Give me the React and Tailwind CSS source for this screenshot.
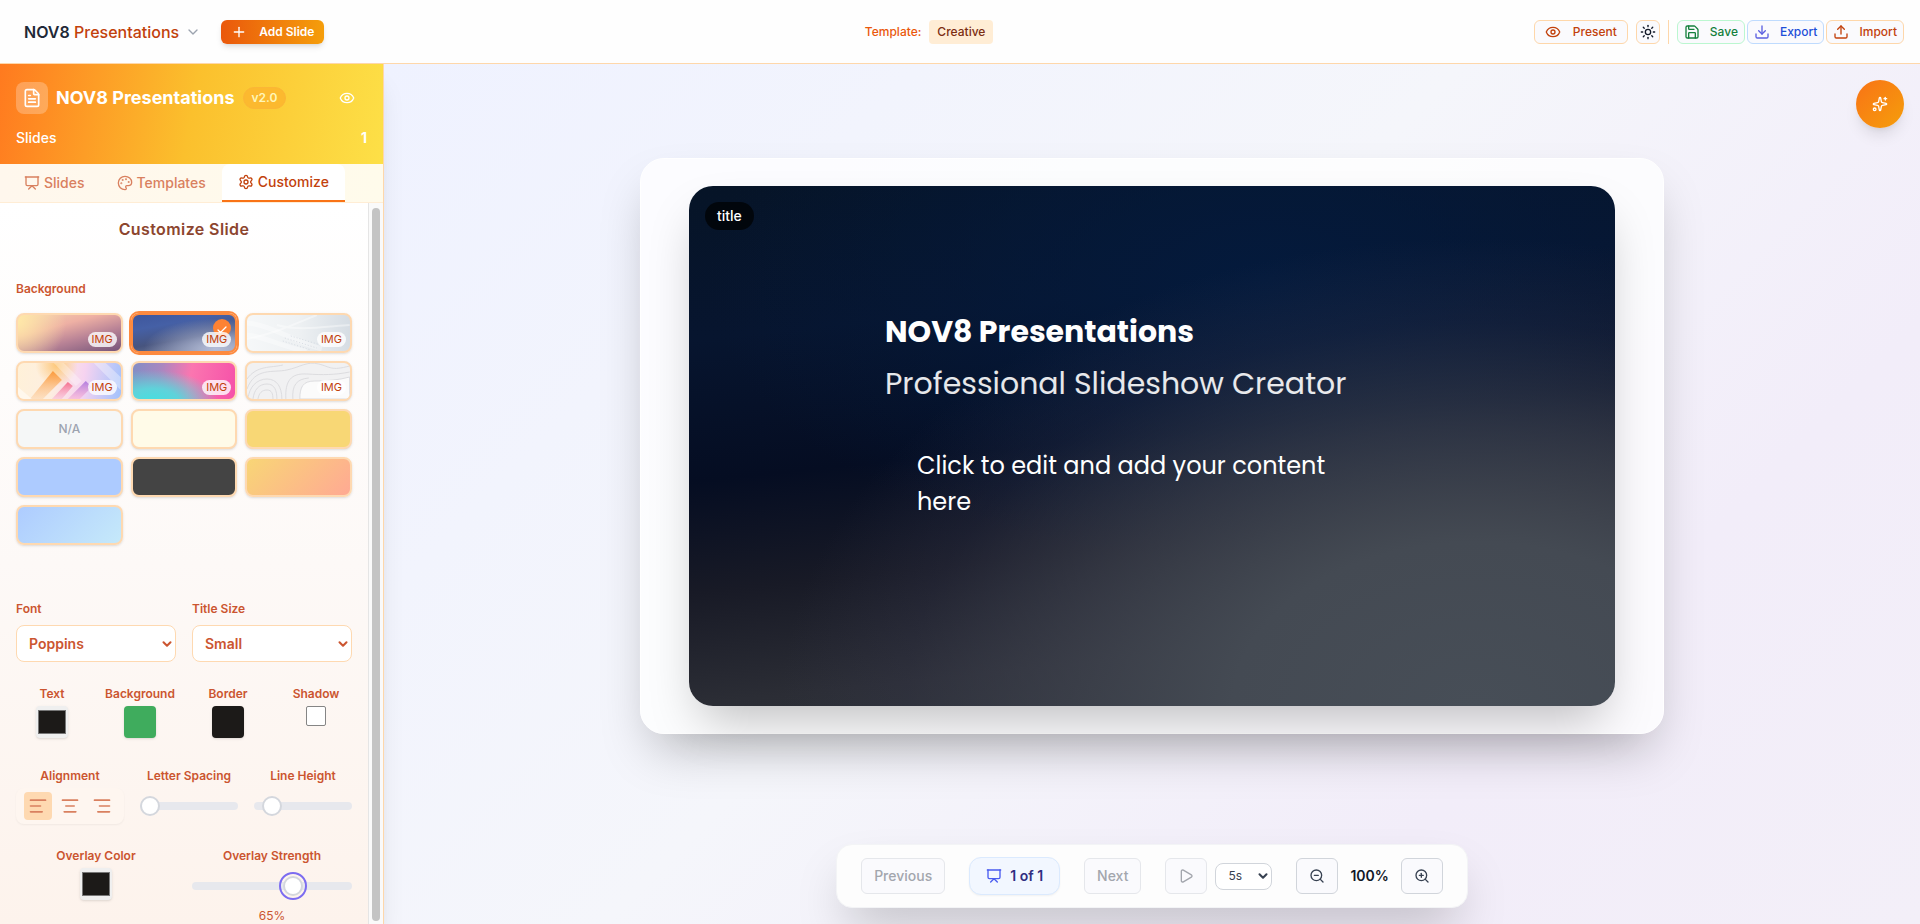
import {
  ChevronDown, Plus, Eye, Sun, Save, Download, Upload, FileText, Presentation, Palette, Settings,
  Check, TextAlignStart, TextAlignCenter, TextAlignEnd, Play, ZoomIn, ZoomOut, Sparkles,
} from "lucide-react";

function Header() {
  const action = "flex h-6 items-center rounded-md border bg-[#fafafd] text-xs font-medium";
  return (
    <header className="flex h-16 shrink-0 items-center justify-between border-b border-[#fed7aa] bg-[#fefefe] px-4">
      <div className="flex items-center gap-5">
        <button className="flex items-center gap-1.5 pl-2 text-base font-medium text-[#c2410c]">
          <span><span className="font-semibold text-[#1f2937]">NOV8</span> Presentations</span>
          <ChevronDown className="size-4 text-[#9ca3af]" />
        </button>
        <button className="flex h-6 items-center gap-3 rounded-md bg-[linear-gradient(90deg,#ea580c,#f59e0b)] px-[10px] text-xs font-semibold text-white shadow-md">
          <Plus className="size-4" />
          Add Slide
        </button>
      </div>
      <div className="flex items-center gap-2 text-xs font-medium">
        <span className="text-[#ea580c]">Template:</span>
        <span className="flex h-6 items-center rounded-sm bg-[#ffedd5] px-2 text-[#7c2d12]">Creative</span>
      </div>
      <div className="flex items-center gap-2">
        <button className={`${action} gap-3 border-[#fed7aa] px-[10px] text-[#c2410c]`}>
          <Eye className="size-4" />
          Present
        </button>
        <button aria-label="Toggle theme" className={`${action} w-6 justify-center border-[#fed7aa] text-[#111827]`}>
          <Sun className="size-4" />
        </button>
        <span className="h-6 w-px bg-[#fed7aa]" />
        <div className="flex items-center gap-[2px]">
          <button className={`${action} gap-2.5 border-[#bbf7d0] px-1.5 text-[#15803d]`}>
            <Save className="size-4" />
            Save
          </button>
          <button className={`${action} gap-2.5 border-[#bfdbfe] px-1.5 text-[#1d4ed8]`}>
            <Download className="size-4 text-[#5b5fe0]" />
            Export
          </button>
          <button className={`${action} gap-2.5 border-[#fed7aa] px-1.5 text-[#c2410c]`}>
            <Upload className="size-4" />
            Import
          </button>
        </div>
      </div>
    </header>
  );
}

const swatches = [
  { name: "Sunset", img: true, fill: "bg-[radial-gradient(circle_at_0%_20%,#ffe9a8_0%,transparent_45%),linear-gradient(165deg,#f5d5b0_0%,#eeb0a4_35%,#b98396_62%,#6d4f76_100%)]" },
  { name: "Night blue", img: true, selected: true, fill: "bg-[radial-gradient(ellipse_at_80%_90%,#b4bdd8_0%,transparent_60%),linear-gradient(170deg,#3d559b_0%,#4560a6_30%,#47547e_60%,#8990a8_100%)]" },
  { name: "White silk", img: true, fill: "bg-[linear-gradient(90deg,#f6f8f9,#eef1f3_50%,#d5dce3)]", art: "silk" },
  { name: "Geometric", img: true, fill: "bg-[radial-gradient(circle_at_38%_10%,#fdc778_0%,transparent_28%),linear-gradient(100deg,#fff1d8_0%,#fdeee0_35%,#f6d3f0_62%,#9cc0fd_100%)]", art: "geo" },
  { name: "Neon", img: true, fill: "bg-[radial-gradient(ellipse_at_20%_100%,#46dfe0_0%,#5fd2da_22%,transparent_55%),linear-gradient(100deg,#7f8ec6_0%,#a987c0_28%,#fb76b0_55%,#f54fa8_100%)]" },
  { name: "Contours", img: true, fill: "bg-[#f1f1f2]", art: "contours" },
  { name: "None", label: "N/A", fill: "bg-[#f5f7f7]" },
  { name: "Cream", fill: "bg-[#fffbe8]" },
  { name: "Gold", fill: "bg-[#f8d775]" },
  { name: "Sky", fill: "bg-[#adcbff]" },
  { name: "Charcoal", fill: "bg-[#444444]" },
  { name: "Peach gradient", fill: "bg-[linear-gradient(135deg,#f8d775,#ffa894)]" },
  { name: "Blue gradient", fill: "bg-[linear-gradient(135deg,#adcbff,#c6eafa)]" },
];

function Art({ kind }) {
  const base = { viewBox: "0 0 103 36", preserveAspectRatio: "none", className: "absolute inset-0 size-full" };
  if (kind === "silk")
    return (
      <svg {...base} fill="none" stroke="#fff">
        <path d="M0 24C30 18 50 8 70 0M30 10C50 16 75 12 103 10" strokeWidth="2" opacity=".4" />
        <path d="M0 8C25 10 45 26 75 34M0 20C20 22 40 34 60 36" strokeWidth="5" opacity=".35" />
        <path d="M36 26L64 35M38 23L70 33M44 21L74 30" stroke="#cfd6dd" strokeDasharray="1 2" opacity=".8" />
      </svg>
    );
  if (kind === "geo")
    return (
      <svg {...base}>
        <defs>
          <linearGradient id="amber" x1="0" y1="0" x2="0" y2="1">
            <stop offset="0" stopColor="#fb9a3c" />
            <stop offset="1" stopColor="#fcd0a4" stopOpacity=".5" />
          </linearGradient>
          <linearGradient id="pink" x1="0" y1="0" x2="0" y2="1">
            <stop offset="0" stopColor="#f5708c" />
            <stop offset="1" stopColor="#f9b6d6" stopOpacity=".5" />
          </linearGradient>
          <linearGradient id="violet" x1="0" y1="0" x2="0" y2="1">
            <stop offset="0" stopColor="#b07ce0" />
            <stop offset="1" stopColor="#f7a8cf" stopOpacity=".5" />
          </linearGradient>
        </defs>
        <path d="M35 8L44 17 25 36H12Z" fill="url(#amber)" />
        <path d="M50 19L55 23 44 36H34Z" fill="url(#pink)" />
        <path d="M68 18L74 24 62 36H50Z" fill="url(#violet)" />
        <path d="M36 0H46L64 18 58 23Z" fill="#fff" opacity=".3" />
        <path d="M76 0L103 27V14L88 0Z" fill="#fff" opacity=".35" />
        <path d="M0 36V24L14 36Z" fill="#fff" opacity=".5" />
      </svg>
    );
  return (
    <svg {...base} fill="none" stroke="#dcdcdf">
      <path d="M1 36C2 24 10 16 20 16S35 24 35 36M6 36C7 27 12 21 20 21S30 28 30 36M11 36C12 30 15 27 20 27S26 31 26 36" />
      <path d="M0 26C8 4 26 10 40 7S60 -2 72 1 84 8 103 3M0 16C10 2 24 5 36 2" />
      <path d="M39 36C38 18 44 10 60 11S88 12 103 9M46 36C45 22 50 16 62 15" />
      <path d="M53 36C53 24 56 18 68 18S92 17 103 14V36Z" fill="#fbfbfb" />
    </svg>
  );
}

function Swatch({ s }) {
  return (
    <button
      aria-label={s.name}
      className={`relative flex h-10 items-center justify-center overflow-hidden rounded-lg border-2 text-xs font-medium text-[#9ca3af] shadow-sm ${s.fill} bg-origin-border ${
        s.selected ? "border-[#fd8a3f] ring-2 ring-[#fd8a3f]" : "border-[#fed9b1]"
      }`}
    >
      {s.art && <Art kind={s.art} />}
      {s.label}
      {s.selected && (
        <span className="absolute top-1 right-1 flex size-[18px] items-center justify-center rounded-full bg-[#fd8233] text-white">
          <Check className="size-3 translate-y-0.5" strokeWidth={2.5} />
        </span>
      )}
      {s.img && (
        <span className="absolute right-1 bottom-1 flex h-[15px] items-center rounded-full bg-white/80 px-1 text-[11px] font-normal text-[#c2410c]">IMG</span>
      )}
    </button>
  );
}

const labelCls = "text-xs leading-4 font-semibold text-[#cb5530]";

function Select({ id, label, value, options }) {
  return (
    <div className="flex flex-col gap-2">
      <label htmlFor={id} className={labelCls}>{label}</label>
      <div className="relative">
        <select id={id} defaultValue={value} className="h-[37px] w-full appearance-none rounded-lg border border-[#fed9b1] bg-white px-3 text-sm font-semibold text-[#cb5530]">
          {options.map((o) => <option key={o}>{o}</option>)}
        </select>
        <ChevronDown className="pointer-events-none absolute top-3 right-0.5 size-3.5 text-[#cb5530]" strokeWidth={3.5} />
      </div>
    </div>
  );
}

function ColorWell({ id, label, value }) {
  return (
    <div className="flex flex-col items-center gap-1">
      <label htmlFor={id} className={labelCls}>{label}</label>
      <input
        id={id}
        type="color"
        defaultValue={value}
        className="size-8 appearance-none rounded-sm bg-[#efefef] px-0.5 py-1 shadow-sm [&::-webkit-color-swatch]:rounded-none [&::-webkit-color-swatch]:border-[#777] [&::-webkit-color-swatch-wrapper]:p-0"
      />
    </div>
  );
}

const rangeCls =
  "h-2 w-full appearance-none rounded-full bg-[#e7e8ed] [&::-webkit-slider-thumb]:size-5 [&::-webkit-slider-thumb]:appearance-none [&::-webkit-slider-thumb]:rounded-full [&::-webkit-slider-thumb]:border-2 [&::-webkit-slider-thumb]:border-[#d4d7dd] [&::-webkit-slider-thumb]:bg-white";

function Range({ id, label, value }) {
  return (
    <div className="flex flex-col items-center gap-[18px]">
      <label htmlFor={id} className={labelCls}>{label}</label>
      <input id={id} type="range" defaultValue={value} className={rangeCls} />
    </div>
  );
}

function Sidebar() {
  const tab = "flex items-center gap-1 text-sm font-medium";
  const align = "flex size-7 items-center justify-center rounded-sm text-[#d9805f]";
  return (
    <aside className="z-10 flex w-96 shrink-0 flex-col border-r border-[#fed7aa] bg-white shadow-xl">
      <div className="flex h-[100px] shrink-0 flex-col justify-between bg-[linear-gradient(100deg,#ff7a1f_0%,#fbc02d_50%,#fde047_100%)] px-4 pt-[18px] pb-4 text-white">
        <div className="flex items-center gap-2">
          <span className="flex size-8 items-center justify-center rounded-lg bg-white/25"><FileText className="size-5" /></span>
          <h2 className="text-lg font-bold">NOV8 Presentations</h2>
          <span className="flex h-[22px] items-center rounded-full border border-[#fbb636] bg-[#fcb92f] px-2 text-xs font-semibold text-[#fff6b8]">v2.0</span>
          <button aria-label="Preview" className="mr-3 ml-auto"><Eye className="size-4" /></button>
        </div>
        <div className="flex items-center justify-between text-sm leading-5 font-medium">
          <span>Slides</span>
          <span className="font-bold">1</span>
        </div>
      </div>

      <div role="tablist" className="flex h-[39px] shrink-0 border-b border-[#ffedd5] bg-[linear-gradient(90deg,#fff7ed,#fffbeb)]">
        <button role="tab" className={`${tab} pr-8 pl-6 text-[#d9805f]`}><Presentation className="size-4" />Slides</button>
        <button role="tab" className={`${tab} pr-4 text-[#d9805f]`}><Palette className="size-4" />Templates</button>
        <button role="tab" aria-selected="true" className={`${tab} rounded-t-lg border-b-2 border-[#f97316] bg-white px-4 text-[#c2410c]`}><Settings className="size-4" />Customize</button>
      </div>

      <div className="flex min-h-0 flex-1">
        <div className="flex min-w-0 flex-1 flex-col overflow-hidden bg-[linear-gradient(180deg,#fff,#fdf9f7_50%,#fdf3ec)] px-4">
          <h3 className="mt-3.5 text-center text-base leading-6 font-semibold tracking-wide text-[#8c452e]">Customize Slide</h3>

          <p className={`${labelCls} mt-10`}>Background</p>
          <div className="mt-4 grid grid-cols-3 gap-2">
            {swatches.map((s) => <Swatch key={s.name} s={s} />)}
          </div>

          <div className="mt-14 grid grid-cols-2 gap-4">
            <Select id="font" label="Font" value="Poppins" options={["Poppins", "Inter", "Roboto"]} />
            <Select id="title-size" label="Title Size" value="Small" options={["Small", "Medium", "Large"]} />
          </div>

          <div className="mt-6 grid grid-cols-4 gap-4">
            <ColorWell id="text-color" label="Text" value="#1c1a18" />
            <div className="flex flex-col items-center gap-1">
              <span className={labelCls}>Background</span>
              <button aria-label="Background color" className="size-8 rounded-sm bg-[#3fac5d] shadow-sm" />
            </div>
            <div className="flex flex-col items-center gap-1">
              <span className={labelCls}>Border</span>
              <button aria-label="Border color" className="size-8 rounded-sm bg-[#1c1a18] shadow-sm" />
            </div>
            <div className="flex flex-col items-center gap-1">
              <label htmlFor="shadow" className={labelCls}>Shadow</label>
              <input id="shadow" type="checkbox" className="size-5 appearance-none rounded-xs border border-[#858585] bg-white" />
            </div>
          </div>

          <div className="mt-[30px] grid grid-cols-[108px_1fr_1fr] gap-4">
            <div className="flex flex-col items-center gap-1">
              <span className={labelCls}>Alignment</span>
              <div className="flex w-full justify-center gap-1 rounded-lg bg-[#fef6f0] py-1 shadow-xs">
                <button aria-label="Align left" className={`${align} bg-[#fed9b1]`}><TextAlignStart className="size-5" /></button>
                <button aria-label="Align center" className={align}><TextAlignCenter className="size-5" /></button>
                <button aria-label="Align right" className={align}><TextAlignEnd className="size-5" /></button>
              </div>
            </div>
            <Range id="letter-spacing" label="Letter Spacing" value={0} />
            <Range id="line-height" label="Line Height" value={10} />
          </div>

          <div className="mt-6 grid grid-cols-2 gap-4">
            <ColorWell id="overlay-color" label="Overlay Color" value="#1c1a18" />
            <div className="flex flex-col items-center">
              <label htmlFor="overlay-strength" className={labelCls}>Overlay Strength</label>
              <input
                id="overlay-strength"
                type="range"
                defaultValue={65}
                className={`${rangeCls} mt-[18px] [&::-webkit-slider-thumb]:outline-2 [&::-webkit-slider-thumb]:outline-offset-2 [&::-webkit-slider-thumb]:outline-[#7c6cf0]`}
              />
              <span className="mt-[18px] text-xs text-[#cb5530]">65%</span>
            </div>
          </div>
        </div>
        <div className="flex w-[15px] shrink-0 justify-center border-l border-[#e5e5e5] bg-[#fafafa] pt-[5px] pb-[3px]">
          <span className="w-2 rounded-full bg-[#c4c4c4]" />
        </div>
      </div>
    </aside>
  );
}

function Slide() {
  return (
    <section className="w-full max-w-[1024px] rounded-3xl border border-white bg-white/75 px-12 py-[27px] shadow-[0_25px_50px_-12px_rgba(0,0,0,0.25)]">
      <article className="relative flex aspect-[926/520] items-center justify-center rounded-3xl bg-[radial-gradient(ellipse_75%_90%_at_85%_100%,#474e57_0%,#444a53_35%,rgba(64,68,80,0.65)_60%,rgba(56,58,80,0.25)_82%,transparent_100%),radial-gradient(ellipse_60%_55%_at_62%_18%,#041a3c_0%,transparent_100%),linear-gradient(174deg,#061427_0%,#07152f_25%,#050d22_48%,#181a26_66%,#2b2d35_84%,#30363a_100%)] text-white shadow-[0_25px_50px_-12px_rgba(0,0,0,0.25)]">
        <span className="absolute top-4 left-4 flex h-7 items-center rounded-full bg-black/70 px-3 text-sm font-medium">title</span>
        <div className="mb-15 w-full max-w-[534px] font-[Poppins,sans-serif]">
          <h1 className="text-3xl leading-10 font-bold">NOV8 Presentations</h1>
          <p className="mt-3 text-3xl leading-10 text-white/90">Professional Slideshow Creator</p>
          <p className="mt-11 pr-12 pl-8 text-2xl leading-9">Click to edit and add your content here</p>
        </div>
      </article>
    </section>
  );
}

function Toolbar() {
  const btn = "flex h-9 items-center justify-center rounded-md border bg-[#fafafd] text-sm font-medium";
  return (
    <nav className="my-4 flex h-16 shrink-0 items-center gap-6 rounded-2xl border border-[#f3f4f6] bg-[#fdfdfd] px-6 shadow-[0_25px_50px_-12px_rgba(0,0,0,0.25)]">
      <button disabled className={`${btn} border-[#e5e7eb] px-3 text-[#a3a6ad]`}>Previous</button>
      <div className="flex h-[38px] items-center gap-2 rounded-xl border border-[#dbeafe] bg-[#f2f7ff] px-4 text-sm font-semibold text-[#312e81] shadow-xs">
        <Presentation className="size-4 text-[#4a5cf0]" />
        1 of 1
      </div>
      <button disabled className={`${btn} border-[#e5e7eb] px-3 text-[#a3a6ad]`}>Next</button>
      <div className="flex items-center gap-2">
        <button disabled aria-label="Play" className={`${btn} w-[42px] border-[#e5e7eb] text-[#a3a6ad]`}><Play className="size-4" /></button>
        <div className="relative">
          <select aria-label="Slide duration" className="h-[27px] w-[57px] appearance-none rounded-lg border border-[#d1d5db] bg-white px-3 text-xs text-[#374151]">
            <option>5s</option>
          </select>
          <ChevronDown className="pointer-events-none absolute top-[7px] right-0.5 size-3.5 text-[#374151]" strokeWidth={3.5} />
        </div>
      </div>
      <div className="flex items-center gap-3">
        <button aria-label="Zoom out" className={`${btn} w-[42px] border-[#d1d5db] text-[#374151]`}><ZoomOut className="size-4" /></button>
        <span className="text-sm font-semibold text-[#111827]">100%</span>
        <button aria-label="Zoom in" className={`${btn} w-[42px] border-[#d1d5db] text-[#374151]`}><ZoomIn className="size-4" /></button>
      </div>
    </nav>
  );
}

export default function App() {
  return (
    <div className="flex h-screen flex-col overflow-hidden bg-white font-[Inter,sans-serif]">
      <Header />
      <div className="flex min-h-0 flex-1">
        <Sidebar />
        <main className="relative flex min-w-0 flex-1 flex-col items-center bg-[linear-gradient(135deg,#eff2ff_0%,#f5f6fb_45%,#f2edf9_75%,#f3eff8_100%)]">
          <div className="flex min-h-0 w-full flex-1 items-center justify-center">
            <Slide />
          </div>
          <Toolbar />
          <button aria-label="AI assistant" className="absolute top-4 right-4 flex size-12 items-center justify-center rounded-full bg-[linear-gradient(135deg,#f97316,#f59e0b)] text-white shadow-lg">
            <Sparkles className="size-4" />
          </button>
        </main>
      </div>
    </div>
  );
}
